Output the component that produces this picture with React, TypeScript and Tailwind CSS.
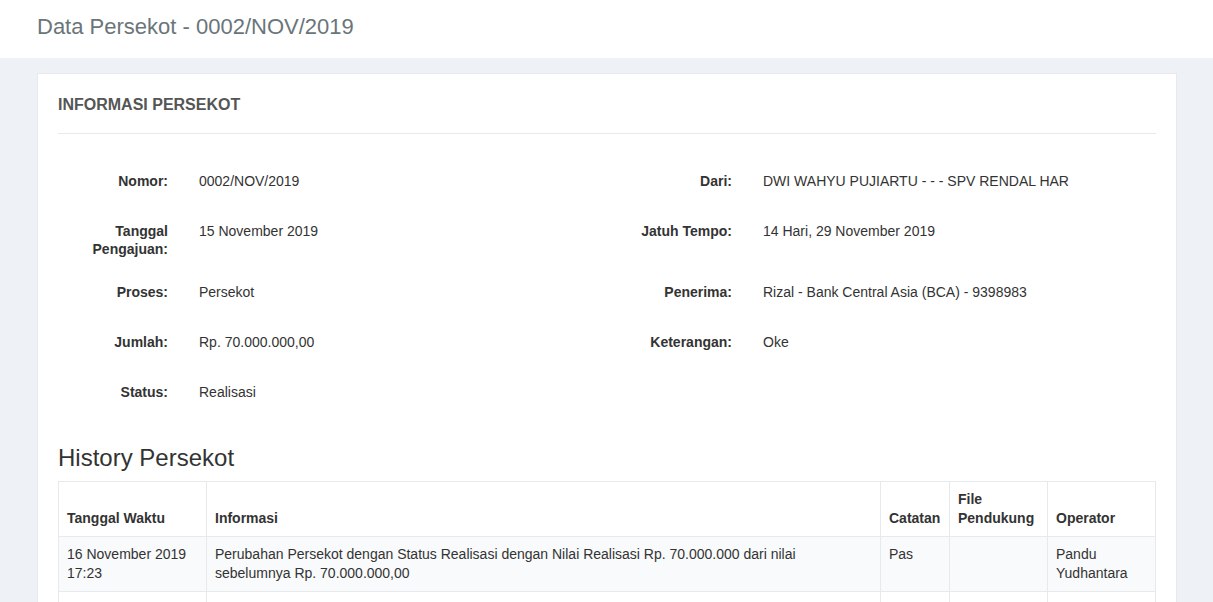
import React from 'react';

interface InfoItem {
    label: string;
    value: string;
}

const leftItems: InfoItem[] = [
    { label: 'Nomor:', value: '0002/NOV/2019' },
    { label: 'Tanggal Pengajuan:', value: '15 November 2019' },
    { label: 'Proses:', value: 'Persekot' },
    { label: 'Jumlah:', value: 'Rp. 70.000.000,00' },
    { label: 'Status:', value: 'Realisasi' },
];

const rightItems: InfoItem[] = [
    { label: 'Dari:', value: 'DWI WAHYU PUJIARTU - - - SPV RENDAL HAR' },
    { label: 'Jatuh Tempo:', value: '14 Hari, 29 November 2019' },
    { label: 'Penerima:', value: 'Rizal - Bank Central Asia (BCA) - 9398983' },
    { label: 'Keterangan:', value: 'Oke' },
];

const history = [
    {
        waktu: '16 November 2019 17:23',
        info: 'Perubahan Persekot dengan Status Realisasi dengan Nilai Realisasi Rp. 70.000.000 dari nilai sebelumnya Rp. 70.000.000,00',
        catatan: 'Pas',
        file: '',
        operator: 'Pandu Yudhantara',
    },
];

const InfoRow: React.FC<{ item?: InfoItem; labelWidth: string }> = ({ item, labelWidth }) => {
    if (!item) return <div />;
    return (
        <div className="flex items-start gap-[31px] mb-[18px]">
            <div className={`${labelWidth} shrink-0 text-right font-bold pt-[7px] leading-[18px]`}>{item.label}</div>
            <div className="pt-[7px] pb-[7px] leading-[18px]">{item.value}</div>
        </div>
    );
};

const App: React.FC = () => {
    const rows = leftItems.map((l, i) => ({ left: l, right: rightItems[i] }));

    return (
        <div
            className="min-h-screen bg-[#eef1f5] text-[14px] text-[#333]"
            style={{ fontFamily: '"Liberation Sans", Arial, sans-serif' }}
        >
            <div className="bg-white h-[58px] flex items-center px-[37px]">
                <h1 className="text-[22px] leading-[26px] text-[#6a757a] -mt-[5px]">Data Persekot - 0002/NOV/2019</h1>
            </div>

            <div className="pl-[37px] pr-[36px] pt-[15px]">
                <div className="bg-white border border-[#e7eaec] px-[20px] pt-[21px] pb-[20px]">
                    <div className="border-b border-[#e7eaec] pb-[18px]">
                        <h2 className="text-[16px] leading-[20px] font-bold text-[#555]">INFORMASI PERSEKOT</h2>
                    </div>

                    <div className="mt-[31px]">
                        {rows.map((r, i) => (
                            <div key={i} className="grid grid-cols-[549px_1fr]">
                                <InfoRow item={r.left} labelWidth="w-[110px]" />
                                <InfoRow item={r.right} labelWidth="w-[125px]" />
                            </div>
                        ))}
                    </div>

                    <h3 className="text-[24px] leading-[26px] mt-[19px] mb-[10px]">History Persekot</h3>

                    <table className="w-full table-fixed border-collapse border border-[#e7eaec] leading-[19px]">
                        <colgroup>
                            <col className="w-[148px]" />
                            <col />
                            <col className="w-[69px]" />
                            <col className="w-[98px]" />
                            <col className="w-[108px]" />
                        </colgroup>
                        <thead>
                            <tr>
                                {['Tanggal Waktu', 'Informasi', 'Catatan', 'File Pendukung', 'Operator'].map((h) => (
                                    <th
                                        key={h}
                                        className="border border-[#e7eaec] px-[8px] py-[8px] text-left align-bottom font-bold"
                                    >
                                        {h}
                                    </th>
                                ))}
                            </tr>
                        </thead>
                        <tbody>
                            {history.map((h, i) => (
                                <tr key={i} className="bg-[#f9fafb]">
                                    <td className="border border-[#e7eaec] px-[8px] py-[8px] align-top">{h.waktu}</td>
                                    <td className="border border-[#e7eaec] px-[8px] py-[8px] align-top">{h.info}</td>
                                    <td className="border border-[#e7eaec] px-[8px] py-[8px] align-top">{h.catatan}</td>
                                    <td className="border border-[#e7eaec] px-[8px] py-[8px] align-top">{h.file}</td>
                                    <td className="border border-[#e7eaec] px-[8px] py-[8px] align-top">{h.operator}</td>
                                </tr>
                            ))}
                            <tr className="bg-white">
                                <td className="border border-[#e7eaec] h-[55px]" />
                                <td className="border border-[#e7eaec]" />
                                <td className="border border-[#e7eaec]" />
                                <td className="border border-[#e7eaec]" />
                                <td className="border border-[#e7eaec]" />
                            </tr>
                        </tbody>
                    </table>
                </div>
            </div>
        </div>
    );
};

export default App;
